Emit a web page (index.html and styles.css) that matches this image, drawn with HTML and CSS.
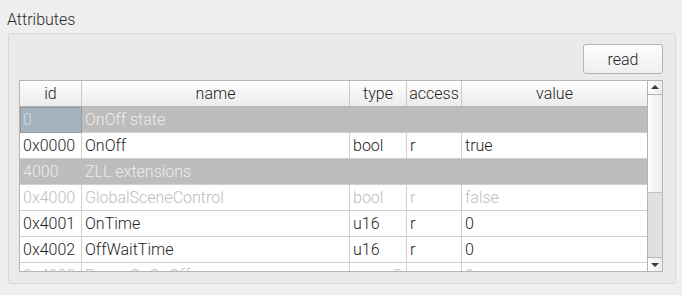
FILE: index.html
```html
<!DOCTYPE html>
<html lang="en">
<head>
    <meta charset="UTF-8">
    <title>Attributes</title>
    <link rel="stylesheet" href="styles.css">
</head>
<body>
    <div class="title">Attributes</div>
    <div class="group">
        <div class="toolbar">
            <button class="btn">read</button>
        </div>
        <div class="table">
            <div class="viewport">
                <!-- header -->
                <div class="row head">
                    <div class="cell">id</div>
                    <div class="cell">name</div>
                    <div class="cell">type</div>
                    <div class="cell">access</div>
                    <div class="cell">value</div>
                </div>
                <div class="row set">
                    <div class="cell current">0</div>
                    <div class="cell span">OnOff state</div>
                </div>
                <div class="row">
                    <div class="cell">0x0000</div>
                    <div class="cell">OnOff</div>
                    <div class="cell">bool</div>
                    <div class="cell">r</div>
                    <div class="cell">true</div>
                </div>
                <div class="row set">
                    <div class="cell">4000</div>
                    <div class="cell span">ZLL extensions</div>
                </div>
                <div class="row off">
                    <div class="cell">0x4000</div>
                    <div class="cell">GlobalSceneControl</div>
                    <div class="cell">bool</div>
                    <div class="cell">r</div>
                    <div class="cell">false</div>
                </div>
                <div class="row">
                    <div class="cell">0x4001</div>
                    <div class="cell">OnTime</div>
                    <div class="cell">u16</div>
                    <div class="cell">r</div>
                    <div class="cell">0</div>
                </div>
                <div class="row">
                    <div class="cell">0x4002</div>
                    <div class="cell">OffWaitTime</div>
                    <div class="cell">u16</div>
                    <div class="cell">r</div>
                    <div class="cell">0</div>
                </div>
                <div class="row off">
                    <div class="cell">0x4003</div>
                    <div class="cell">PowerOnOnOff</div>
                    <div class="cell">enum8</div>
                    <div class="cell">rw</div>
                    <div class="cell">0</div>
                </div>
            </div>
            <div class="scrollbar">
                <div class="arrow up"></div>
                <div class="handle"></div>
                <div class="track"></div>
                <div class="arrow down"></div>
            </div>
        </div>
    </div>
</body>
</html>
```

FILE: styles.css
```css
body {
    margin: 0;
    background-color: #efefef;
    font-family: Roboto, "Liberation Sans", sans-serif;
    font-size: 16px;
    font-weight: 300;
    color: #1e1e1e;
}

.title {
    padding: 10px 0 0 7px;
    line-height: 19px;
    color: #2a2a2a;
}

/* group box around the table */
.group {
    box-sizing: border-box;
    margin: 4px 0 0 8px;
    width: 668px;
    height: 251px;
    padding: 10px 12px 0 10px;
    border: 1px solid #d9d9d9;
    border-radius: 2px;
    background-color: #eaeaea;
}

.toolbar {
    display: flex;
    justify-content: flex-end;
}

.btn {
    box-sizing: border-box;
    width: 80px;
    height: 30px;
    border: 1px solid #b4b4b4;
    border-radius: 3px;
    background: linear-gradient(#fdfdfd, #efefef);
    font-family: inherit;
    font-size: 16px;
    font-weight: 300;
    color: #1e1e1e;
    padding: 0;
}

.table {
    display: flex;
    margin-top: 6px;
    width: 644px;
    height: 192px;
    box-sizing: border-box;
    border: 1px solid #b4b4b4;
    background-color: #fff;
}

.viewport {
    width: 628px;
    height: 190px;
    overflow: hidden;
}

.row {
    display: grid;
    grid-template-columns: 62px 268px 57px 55px 186px;
}

.cell {
    box-sizing: border-box;
    height: 26px;
    line-height: 25px;
    padding-left: 3px;
    border-right: 1px solid #d0d0d0;
    border-bottom: 1px solid #d0d0d0;
    white-space: nowrap;
    overflow: hidden;
}

.head .cell {
    text-align: center;
    padding-left: 0;
    background: linear-gradient(#fefefe, #ececec);
    border-right-color: #c8c8c8;
    border-bottom-color: #b4b4b4;
}

/* group rows */
.set .cell {
    background-color: #bdbdbd;
    color: #ececec;
    border-color: #bdbdbd;
    border-bottom-color: #d0d0d0;
}

.set .span {
    grid-column: 2 / 6;
}

.set .current {
    background-color: #a6b3bd;
    border: 1px solid #8a9eae;
    padding-left: 2px;
    line-height: 23px;
    color: #d6dde3;
}

.off .cell {
    color: #bdbdbd;
}

.scrollbar {
    width: 15px;
    display: flex;
    flex-direction: column;
    background-color: #e0e0e0;
}

.arrow {
    box-sizing: border-box;
    height: 14px;
    border: 1px solid #b4b4b4;
    border-right: none;
    background: linear-gradient(90deg, #fdfdfd, #ececec);
    position: relative;
}

.arrow::after {
    content: "";
    position: absolute;
    left: 3px;
    top: 4px;
    border-left: 4px solid transparent;
    border-right: 4px solid transparent;
}

.up {
    border-top: none;
}

.up::after {
    border-bottom: 4px solid #3c3c3c;
}

.down {
    border-bottom: none;
}

.down::after {
    top: 5px;
    border-top: 4px solid #3c3c3c;
}

.handle {
    box-sizing: border-box;
    height: 98px;
    border-left: 1px solid #b4b4b4;
    border-bottom: 1px solid #c4c4c4;
    background: linear-gradient(90deg, #fefefe, #ececec);
}

.track {
    flex: 1;
    border-left: 1px solid #b4b4b4;
}
```
